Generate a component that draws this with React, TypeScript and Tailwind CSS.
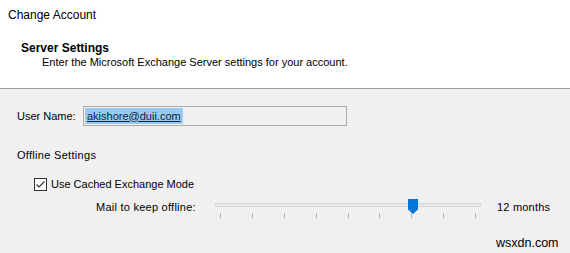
import React from "react";

const TICKS = [0, 1, 2, 3, 4, 5, 6, 7, 8];

const CheckBox: React.FC = () => (
  <svg width="13" height="13" viewBox="0 0 13 13" className="shrink-0">
    <rect x="0.5" y="0.5" width="12" height="12" fill="#ffffff" stroke="#333333" />
    <path d="M2.5 6.5 L5 9 L10.5 3.5" fill="none" stroke="#333333" strokeWidth="1.2" />
  </svg>
);

const Slider: React.FC = () => (
  <div className="relative w-[266px] h-[20px] shrink-0">
    <div className="mt-[4px] h-[4px] bg-[#e7e7e7] border border-[#d6d6d6]" />
    <div className="mt-[6px] flex justify-between px-[5px]">
      {TICKS.map((t) => (
        <div key={t} className="w-px h-[5px] bg-[#b4b4b4]" />
      ))}
    </div>
    {/* thumb */}
    <svg width="10" height="15" viewBox="0 0 10 15" className="absolute top-0 left-[193px]">
      <path d="M0 0 H10 V10.5 L5 15 L0 10.5 Z" fill="#0078d7" />
    </svg>
  </div>
);

const App: React.FC = () => {
  return (
    <div className="w-[570px] h-[253px] overflow-hidden bg-[#f0f0f0] text-black text-[11px] leading-[13px] font-['Liberation_Sans',Arial,sans-serif]">
      <div className="h-[89px] bg-white border-b border-[#a0a0a0] pt-[8px] px-[8px]">
        <div className="text-[12px] leading-[14px]">Change Account</div>
        <div className="mt-[19px] pl-[13px] text-[12px] leading-[14px] font-bold">Server Settings</div>
        <div className="mt-[1px] pl-[34px]">Enter the Microsoft Exchange Server settings for your account.</div>
      </div>

      <div className="pt-[17px] pl-[17px] flex items-center">
        <div className="w-[66px]">User Name:</div>
        <div className="w-[264px] h-[20px] border border-[#ababab] bg-[#f0f0f0] p-px flex items-center">
          <span className="h-[16px] px-[2px] flex items-center bg-[#99c9ef] text-[#0c1f3f] underline">
            akishore@duii.com
          </span>
        </div>
      </div>

      <div className="mt-[23px] pl-[17px] tracking-[0.3px]">Offline Settings</div>

      <div className="mt-[16px] pl-[34px] flex items-center gap-[4px]">
        <CheckBox />
        <span>Use Cached Exchange Mode</span>
      </div>

      <div className="mt-[8px] flex items-start">
        <div className="ml-[96px] w-[119px] mt-[2px] tracking-[0.25px]">Mail to keep offline:</div>
        <Slider />
        <div className="ml-[16px] mt-[2px] tracking-[0.2px]">12 months</div>
      </div>

      <div className="mt-[17px] pl-[496px] text-[12.5px] leading-[15px]">wsxdn.com</div>
    </div>
  );
};

export default App;
